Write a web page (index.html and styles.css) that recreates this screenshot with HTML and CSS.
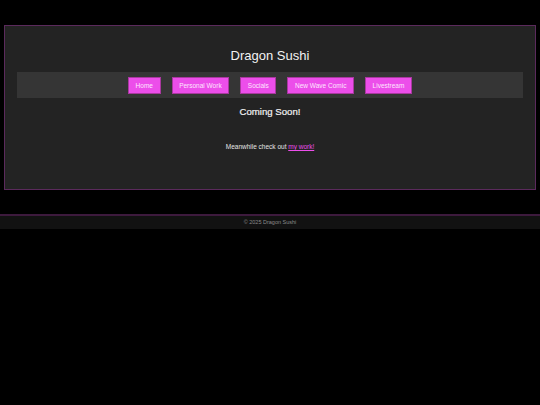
FILE: index.html
```html
<!DOCTYPE html>
<html>
<head>
<meta charset="utf-8">
<link rel="stylesheet" href="styles.css">
</head>
<body>
<main class="panel">
  <h1 class="title">Dragon Sushi</h1>
  <nav class="nav">
    <a class="btn" href="#">Home</a>
    <a class="btn" href="#">Personal Work</a>
    <a class="btn" href="#">Socials</a>
    <a class="btn" href="#">New Wave Comic</a>
    <a class="btn" href="#">Livestream</a>
  </nav>
  <h2 class="soon">Coming Soon!</h2>
  <p class="note">Meanwhile check out <a class="link" href="#">my work!</a></p>
</main>
<footer class="footer">© 2025 Dragon Sushi</footer>
</body>
</html>
```
FILE: styles.css
```css
html, body {
  margin: 0;
  padding: 0;
  background: #000;
  font-family: "Liberation Sans", Arial, sans-serif;
  color: #eee;
}
.panel {
  margin: 25px 4px 0;
  border: 1px solid #5b2a5c;
  background: #232323;
  padding: 0 12px 38px;
  text-align: center;
}
.title {
  font-size: 13px;
  font-weight: normal;
  line-height: 17px;
  margin: 21px 0 8px;
  color: #f2f2f2;
}
.nav {
  background: #353535;
  height: 26px;
  display: flex;
  justify-content: center;
  align-items: center;
  gap: 11px;
}
.btn {
  display: block;
  background: #ec4eea;
  border: 1px solid #a9389f;
  color: #ffe6ff;
  font-size: 6.5px;
  line-height: 15px;
  padding: 0 6.6px;
  text-decoration: none;
}
.soon {
  font-size: 9.6px;
  font-weight: normal;
  line-height: 13px;
  margin: 7px 0 0;
  color: #f2f2f2;
  -webkit-text-stroke: 0.2px #f2f2f2;
}
.note {
  font-size: 6.5px;
  line-height: 9px;
  margin: 24px 0 0;
  color: #e6e6e6;
}
.link {
  color: #ec4eea;
}
.footer {
  margin-top: 24px;
  border-top: 2px solid #3d1a3d;
  background: #121212;
  color: #8a8a8a;
  font-size: 5.5px;
  line-height: 13px;
  text-align: center;
}
```
